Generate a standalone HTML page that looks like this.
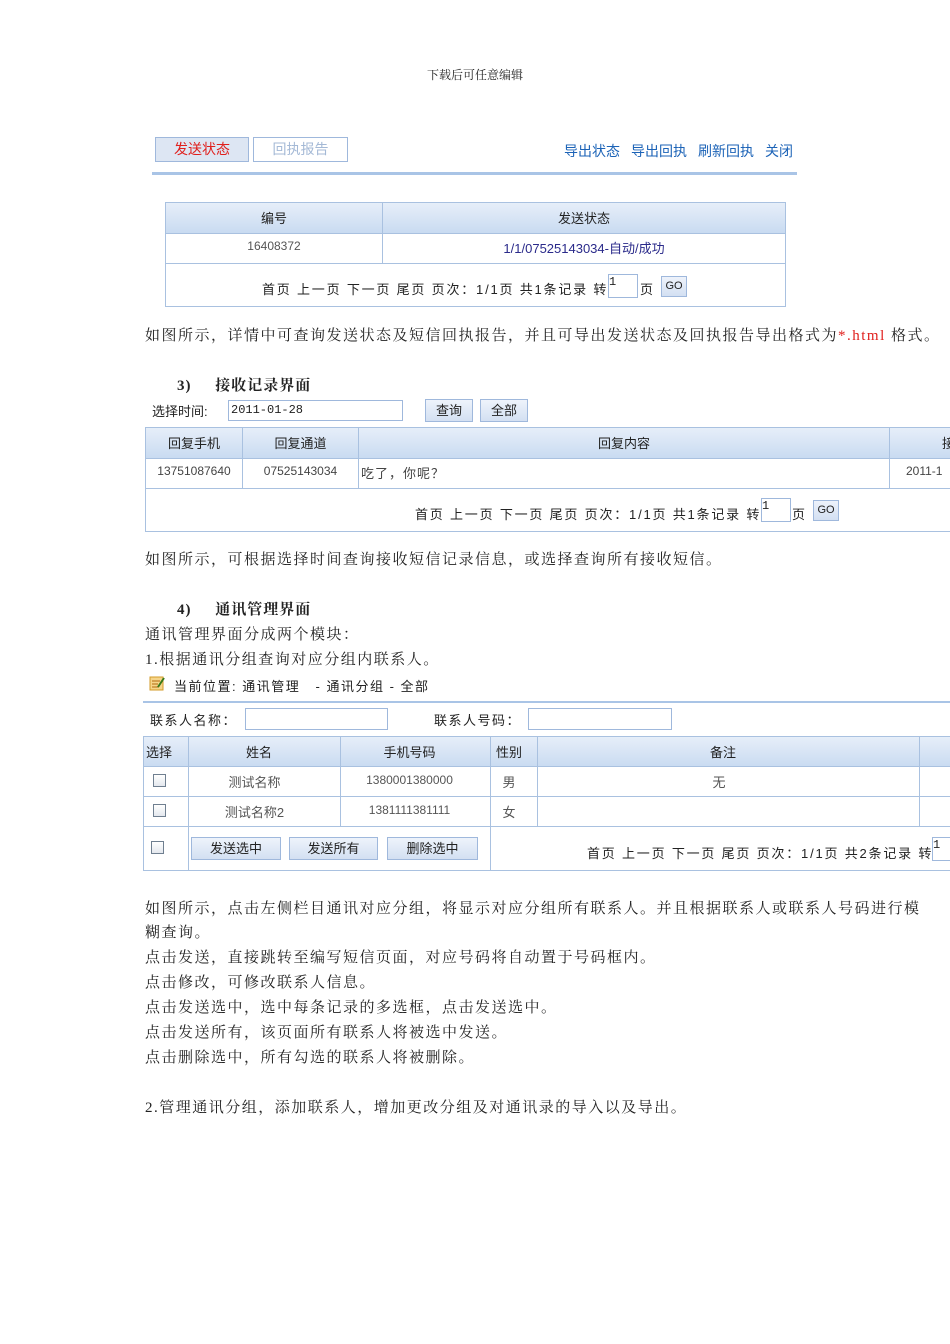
<!DOCTYPE html>
<html><head><meta charset="utf-8"><style>
body{margin:0;width:950px;height:1344px;background:#fff;position:relative;overflow:hidden;font-family:"Liberation Serif","Noto Serif CJK SC",serif;color:#222}
.a{position:absolute;white-space:nowrap}
.p{font-size:15px;line-height:18px;letter-spacing:1.5px}
.u{font-family:"Liberation Sans","Noto Sans CJK SC",sans-serif;font-size:13px;color:#222}
.pg{letter-spacing:1.8px}
.bx{position:absolute;border:1px solid #a9c1e0;box-sizing:border-box}
.hd{position:absolute;background:linear-gradient(#e6eef9,#c9dbf1);box-sizing:border-box}
.vl{position:absolute;width:1px;background:#a9c1e0}
.hl{position:absolute;height:1px;background:#a9c1e0}
.btn{position:absolute;background:linear-gradient(#eef3fb,#d3e0f2);border:1px solid #9fb8dc;box-sizing:border-box;text-align:center;font-family:"Liberation Sans","Noto Sans CJK SC",sans-serif;font-size:13px}
.in{position:absolute;border:1px solid #9fb8dc;background:#fff;box-sizing:border-box;font-family:"Liberation Mono",monospace;font-size:12px}
.cb{position:absolute;width:13px;height:13px;border:1px solid #6f7f90;background:linear-gradient(#fff,#e4e8ee);box-sizing:border-box}
.c{text-align:center}
</style></head><body>
<div class="a" style="left:0;width:950px;top:66px;text-align:center;font-size:12px">下载后可任意编辑</div>

<div class="btn" style="left:155px;top:137px;width:94px;height:25px;line-height:23px;color:#e0201d;font-size:14px;background:#dde6f3">发送状态</div>
<div class="btn" style="left:253px;top:137px;width:95px;height:25px;line-height:23px;color:#a4b9d6;font-size:14px;background:#fff">回执报告</div>
<div class="a u" style="left:564px;top:141px;color:#1c63b7;font-size:14px">导出状态<span style="margin-left:11px">导出回执</span><span style="margin-left:11px">刷新回执</span><span style="margin-left:11px">关闭</span></div>
<div class="a" style="left:152px;top:172px;width:645px;height:3px;background:#a9c4e6"></div>

<div class="bx" style="left:165px;top:202px;width:621px;height:105px"></div>
<div class="hd" style="left:166px;top:203px;width:619px;height:30px"></div>
<div class="hl" style="left:165px;top:233px;width:621px"></div>
<div class="hl" style="left:165px;top:263px;width:621px"></div>
<div class="vl" style="left:382px;top:202px;height:61px"></div>
<div class="a u c" style="left:166px;width:216px;top:208px">编号</div>
<div class="a u c" style="left:383px;width:402px;top:208px">发送状态</div>
<div class="a u c" style="left:166px;width:216px;top:239px;color:#555;font-size:12px">16408372</div>
<div class="a u c" style="left:383px;width:402px;top:238px;color:#2a2a8a">1/1/07525143034-自动/成功</div>
<div class="a u pg" style="left:262px;top:279px">首页 上一页 下一页 尾页 页次：1/1页 共1条记录 转</div>
<div class="in" style="left:608px;top:274px;width:30px;height:24px">1</div>
<div class="a u" style="left:640px;top:279px">页</div>
<div class="btn" style="left:661px;top:276px;width:26px;height:21px;line-height:19px;font-size:11px">GO</div>

<div class="a p" style="left:145px;top:327px">如图所示，详情中可查询发送状态及短信回执报告，并且可导出发送状态及回执报告导出格式为<span style="color:#e0201d">*.html</span> 格式。</div>

<div class="a p" style="left:177px;top:377px;font-weight:bold;letter-spacing:1px">3)&nbsp;&nbsp;&nbsp;&nbsp; 接收记录界面</div>
<div class="a u" style="left:152px;top:401px">选择时间:</div>
<div class="in" style="left:228px;top:400px;width:175px;height:21px;line-height:19px;padding-left:2px">2011-01-28</div>
<div class="btn" style="left:425px;top:399px;width:48px;height:23px;line-height:21px">查询</div>
<div class="btn" style="left:480px;top:399px;width:48px;height:23px;line-height:21px">全部</div>

<div class="bx" style="left:145px;top:427px;width:820px;height:105px"></div>
<div class="hd" style="left:146px;top:428px;width:810px;height:30px"></div>
<div class="hl" style="left:145px;top:458px;width:810px"></div>
<div class="hl" style="left:145px;top:488px;width:810px"></div>
<div class="vl" style="left:242px;top:427px;height:61px"></div>
<div class="vl" style="left:358px;top:427px;height:61px"></div>
<div class="vl" style="left:889px;top:427px;height:61px"></div>
<div class="a u c" style="left:146px;width:96px;top:433px">回复手机</div>
<div class="a u c" style="left:243px;width:115px;top:433px">回复通道</div>
<div class="a u c" style="left:359px;width:530px;top:433px">回复内容</div>
<div class="a u" style="left:942px;top:433px">接</div>
<div class="a u c" style="left:146px;width:96px;top:464px;font-size:12px;color:#444">13751087640</div>
<div class="a u c" style="left:243px;width:115px;top:464px;font-size:12px;color:#444">07525143034</div>
<div class="a u" style="left:361px;top:463px;color:#444;letter-spacing:1px">吃了，你呢？</div>
<div class="a u" style="left:906px;top:464px;font-size:12px;color:#444">2011-1</div>
<div class="a u pg" style="left:415px;top:504px">首页 上一页 下一页 尾页 页次：1/1页 共1条记录 转</div>
<div class="in" style="left:761px;top:498px;width:30px;height:24px">1</div>
<div class="a u" style="left:792px;top:504px">页</div>
<div class="btn" style="left:813px;top:500px;width:26px;height:21px;line-height:19px;font-size:11px">GO</div>

<div class="a p" style="left:145px;top:551px">如图所示，可根据选择时间查询接收短信记录信息，或选择查询所有接收短信。</div>
<div class="a p" style="left:177px;top:601px;font-weight:bold;letter-spacing:1px">4)&nbsp;&nbsp;&nbsp;&nbsp; 通讯管理界面</div>
<div class="a p" style="left:145px;top:626px">通讯管理界面分成两个模块：</div>
<div class="a p" style="left:145px;top:651px">1.根据通讯分组查询对应分组内联系人。</div>

<svg class="a" style="left:149px;top:675px" width="17" height="16"><rect x="1" y="2" width="13" height="13" fill="#f6d58a" stroke="#d39b2a"/><path d="M3 6h8M3 9h6M3 12h7" stroke="#b36b10"/><path d="M9 12l6-9" stroke="#3a7a1a" stroke-width="2"/></svg>
<div class="a u" style="left:174px;top:676px;letter-spacing:1.5px">当前位置: 通讯管理&nbsp;&nbsp; - 通讯分组 - 全部</div>
<div class="a" style="left:143px;top:701px;width:807px;height:2px;background:#a9c4e6"></div>
<div class="a u" style="left:150px;top:710px;letter-spacing:1.5px">联系人名称：</div>
<div class="in" style="left:245px;top:708px;width:143px;height:22px"></div>
<div class="a u" style="left:434px;top:710px;letter-spacing:1.5px">联系人号码：</div>
<div class="in" style="left:528px;top:708px;width:144px;height:22px"></div>

<div class="bx" style="left:143px;top:736px;width:820px;height:135px"></div>
<div class="hd" style="left:144px;top:737px;width:810px;height:30px"></div>
<div class="hl" style="left:143px;top:766px;width:810px"></div>
<div class="hl" style="left:143px;top:796px;width:810px"></div>
<div class="hl" style="left:143px;top:826px;width:810px"></div>
<div class="vl" style="left:188px;top:736px;height:135px"></div>
<div class="vl" style="left:340px;top:736px;height:90px"></div>
<div class="vl" style="left:490px;top:736px;height:135px"></div>
<div class="vl" style="left:537px;top:736px;height:90px"></div>
<div class="vl" style="left:919px;top:736px;height:90px"></div>
<div class="a u" style="left:146px;top:742px">选择</div>
<div class="a u c" style="left:189px;width:140px;top:742px">姓名</div>
<div class="a u c" style="left:341px;width:137px;top:742px">手机号码</div>
<div class="a u c" style="left:491px;width:36px;top:742px">性别</div>
<div class="a u c" style="left:538px;width:370px;top:742px">备注</div>
<div class="cb" style="left:153px;top:774px"></div>
<div class="cb" style="left:153px;top:804px"></div>
<div class="cb" style="left:151px;top:841px"></div>
<div class="a u c" style="left:189px;width:131px;top:772px;color:#555">测试名称</div>
<div class="a u c" style="left:189px;width:131px;top:802px;color:#555">测试名称2</div>
<div class="a u c" style="left:341px;width:137px;top:773px;font-size:12px;color:#555">1380001380000</div>
<div class="a u c" style="left:341px;width:137px;top:803px;font-size:12px;color:#555">1381111381111</div>
<div class="a u c" style="left:491px;width:36px;top:772px;color:#555">男</div>
<div class="a u c" style="left:491px;width:36px;top:802px;color:#555">女</div>
<div class="a u c" style="left:538px;width:362px;top:772px;color:#555">无</div>
<div class="btn" style="left:191px;top:837px;width:90px;height:23px;line-height:21px">发送选中</div>
<div class="btn" style="left:289px;top:837px;width:89px;height:23px;line-height:21px">发送所有</div>
<div class="btn" style="left:387px;top:837px;width:91px;height:23px;line-height:21px">删除选中</div>
<div class="a u pg" style="left:587px;top:843px">首页 上一页 下一页 尾页 页次：1/1页 共2条记录 转</div>
<div class="in" style="left:932px;top:837px;width:30px;height:24px">1</div>

<div class="a p" style="left:145px;top:900px">如图所示，点击左侧栏目通讯对应分组，将显示对应分组所有联系人。并且根据联系人或联系人号码进行模</div>
<div class="a p" style="left:145px;top:924px">糊查询。</div>
<div class="a p" style="left:145px;top:949px">点击发送，直接跳转至编写短信页面，对应号码将自动置于号码框内。</div>
<div class="a p" style="left:145px;top:974px">点击修改，可修改联系人信息。</div>
<div class="a p" style="left:145px;top:999px">点击发送选中，选中每条记录的多选框，点击发送选中。</div>
<div class="a p" style="left:145px;top:1024px">点击发送所有，该页面所有联系人将被选中发送。</div>
<div class="a p" style="left:145px;top:1049px">点击删除选中，所有勾选的联系人将被删除。</div>
<div class="a p" style="left:145px;top:1099px">2.管理通讯分组，添加联系人，增加更改分组及对通讯录的导入以及导出。</div>
</body></html>
